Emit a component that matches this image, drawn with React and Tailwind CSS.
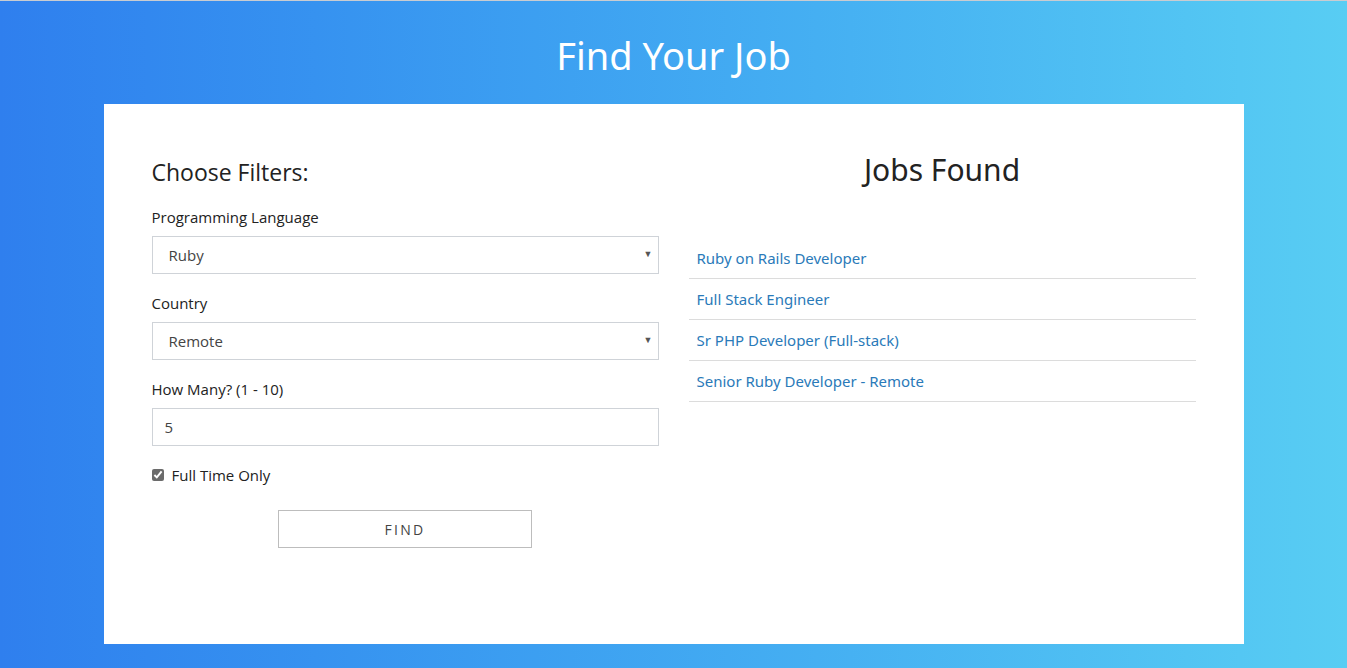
import React, { useState } from 'react';

const jobs = [
  'Ruby on Rails Developer',
  'Full Stack Engineer',
  'Sr PHP Developer (Full-stack)',
  'Senior Ruby Developer - Remote',
];

function Select({ value, options }) {
  return (
    <div className="relative">
      <select
        defaultValue={value}
        className="w-full h-[38px] appearance-none border border-[#cfd3d8] bg-white pl-4 pr-8 text-[15px] text-[#444] outline-none"
      >
        {options.map((o) => (
          <option key={o}>{o}</option>
        ))}
      </select>
      <span className="pointer-events-none absolute right-[6px] top-[13px] text-[9px] leading-none text-[#555]">▼</span>
    </div>
  );
}

export default function App() {
  const [count, setCount] = useState('5');
  const [fullTime, setFullTime] = useState(true);

  return (
    <div
      className="min-h-[668px] w-full border-t border-[#c9ccd1] bg-gradient-to-r from-[#2f7fee] to-[#58cdf3] font-['Open_Sans','Noto_Sans',sans-serif]"
    >
      <h1 className="h-[103px] flex items-center justify-center text-[38px] text-white font-['Noto_Sans',sans-serif] pt-[6px]">
        Find Your Job
      </h1>

      <div className="mx-auto w-[1140px] h-[540px] bg-white px-[48px] pt-[52px] flex gap-[30px]">
        {/* filters */}
        <div className="w-[507px] text-[#222]">
          <h2 className="text-[23px] leading-[32px] mb-[18px]">Choose Filters:</h2>

          <label className="block text-[15px] leading-[22px] mb-[8px]">Programming Language</label>
          <Select value="Ruby" options={['Ruby', 'JavaScript', 'Python', 'PHP']} />

          <label className="block text-[15px] leading-[22px] mt-[18px] mb-[8px]">Country</label>
          <Select value="Remote" options={['Remote', 'USA', 'Germany', 'Canada']} />

          <label className="block text-[15px] leading-[22px] mt-[18px] mb-[8px]">How Many? (1 - 10)</label>
          <input
            type="number"
            value={count}
            onChange={(e) => setCount(e.target.value)}
            className="w-full h-[38px] border border-[#cfd3d8] px-3 text-[15px] text-[#444] outline-none [appearance:textfield]"
          />

          <label className="flex items-center gap-[8px] mt-[18px] text-[15px] leading-[22px]">
            <input
              type="checkbox"
              checked={fullTime}
              onChange={(e) => setFullTime(e.target.checked)}
              className="w-[12px] h-[12px] accent-[#6b6b6b] m-0"
            />
            Full Time Only
          </label>

          <div className="flex justify-center mt-[24px]">
            <button className="w-[254px] h-[38px] border border-[#bdbdbd] bg-white text-[14px] tracking-[0.16em] text-[#444] font-medium">
              FIND
            </button>
          </div>
        </div>

        {/* results */}
        <div className="w-[507px] font-['Noto_Sans',sans-serif]">
          <h2 className="text-center text-[30px] leading-[36px] text-[#222] -mt-[4px]">Jobs Found</h2>
          <ul className="mt-[50px]">
            {jobs.map((j) => (
              <li key={j} className="border-b border-[#dcdcdc] h-[41px] flex items-center px-[8px]">
                <a href="#" className="text-[15px] text-[#2a7ab9]">{j}</a>
              </li>
            ))}
          </ul>
        </div>
      </div>
    </div>
  );
}
